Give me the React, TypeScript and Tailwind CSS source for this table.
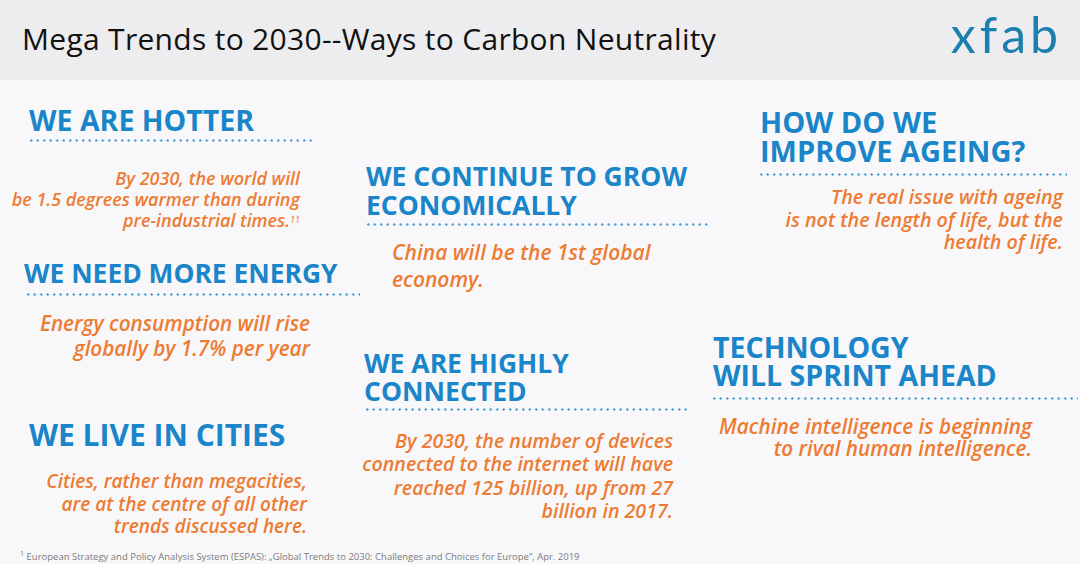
const Dots = ({ className }: { className: string }) => (
  <div
    className={`h-[3px] bg-[radial-gradient(circle,#4f9fd8_1.1px,transparent_1.4px)] bg-[length:6.5px_3px] ${className}`}
  />
)

const Heading = ({ lines, className }: { lines: string[]; className: string }) => (
  <h2 className={`font-bold uppercase text-[#1a85c8] ${className}`}>
    {lines.map((l) => (
      <div key={l}>{l}</div>
    ))}
  </h2>
)

const Body = ({ lines, className }: { lines: React.ReactNode[]; className: string }) => (
  <p className={`italic font-semibold text-[#ee7b32] ${className}`}>
    {lines.map((l, i) => (
      <span key={i} className="block">
        {l}
      </span>
    ))}
  </p>
)

export default function App() {
  return (
    <div className="w-[1080px] h-[564px] flex flex-col bg-[#f8f8fb] overflow-hidden font-['Open_Sans',sans-serif]">
      {/* Title bar */}
      <header className="h-[80px] shrink-0 bg-[#ededef] flex items-center justify-between pl-[22px] pr-[22px]">
        <h1 className="text-[30px] tracking-[0.3px] text-[#111] leading-none -mt-[2px]">
          Mega Trends to 2030--Ways to Carbon Neutrality
        </h1>
        <span className="font-['Lato',sans-serif] font-normal text-[50px] leading-none text-[#1b80b0] tracking-[4px] -mt-[12px] -mr-[4px]">
          xfab
        </span>
      </header>

      <main className="h-[470px] flex">
        {/* Column 1 */}
        <div className="w-[362px] shrink-0 flex flex-col">
          <Heading lines={["We are hotter"]} className="text-[28.5px] leading-[28px] mt-[26px] pl-[29px]" />
          <Dots className="mt-[5px] ml-[28px] w-[284px]" />
          <Body
            className="text-[18px] leading-[21px] text-right pr-[62px] mt-[26px]"
            lines={[
              "By 2030, the world will",
              "be 1.5 degrees warmer than during",
              <>
                pre-industrial times.<sup className="text-[9px] font-normal">11</sup>
              </>,
            ]}
          />
          <Heading lines={["We need more energy"]} className="text-[26.4px] leading-[28px] mt-[28px] pl-[24px]" />
          <Dots className="mt-[6px] ml-[25px] w-[335px]" />
          <Body
            className="text-[20.7px] leading-[25px] text-right pr-[52px] mt-[15px]"
            lines={["Energy consumption will rise", "globally by 1.7% per year"]}
          />
          <Heading lines={["We live in cities"]} className="text-[30px] leading-[28px] mt-[60px] pl-[29px]" />
          <Body
            className="text-[19px] leading-[22.5px] text-right pr-[55px] mt-[21px]"
            lines={["Cities, rather than megacities,", "are at the centre of all other", "trends discussed here."]}
          />
        </div>

        {/* Column 2 */}
        <div className="w-[348px] shrink-0 flex flex-col">
          <Heading
            lines={["We continue to grow", "economically"]}
            className="text-[26.5px] leading-[28.5px] mt-[82px] pl-[4px]"
          />
          <Dots className="mt-[4px] ml-[3px] w-[343px]" />
          <Body
            className="text-[21px] leading-[27px] pl-[30px] mt-[13px]"
            lines={["China will be the 1st global", "economy."]}
          />
          <Heading
            lines={["We are highly", "connected"]}
            className="text-[26.5px] leading-[27.5px] mt-[57px] pl-[2px]"
          />
          <Dots className="mt-[3px] ml-[2px] w-[323px]" />
          <Body
            className="text-[19.6px] leading-[23.3px] text-right pr-[37px] mt-[18px]"
            lines={[
              "By 2030, the number of devices",
              "connected to the internet will have",
              "reached 125 billion, up from 27",
              "billion in 2017.",
            ]}
          />
        </div>

        {/* Column 3 */}
        <div className="flex-1 flex flex-col">
          <Heading
            lines={["How do we", "improve ageing?"]}
            className="text-[29px] leading-[29px] mt-[27px] pl-[50px]"
          />
          <Dots className="mt-[8px] ml-[48px] w-[309px]" />
          <Body
            className="text-[19.7px] leading-[22.5px] text-right pr-[17px] mt-[10px]"
            lines={["The real issue with ageing", "is not the length of life, but the", "health of life."]}
          />
          <Heading
            lines={["Technology", "will sprint ahead"]}
            className="text-[28.5px] leading-[28.5px] mt-[79px] pl-[3px]"
          />
          <Dots className="mt-[7px] ml-[1px] w-[367px]" />
          <Body
            className="text-[20.7px] leading-[22.5px] text-right pr-[48px] mt-[15px]"
            lines={["Machine intelligence is beginning", "to rival human intelligence."]}
          />
        </div>
      </main>

      <footer className="h-[14px] leading-[14px] pl-[20px] text-[9.5px] text-[#7a7a7a]">
        <sup>1</sup> European Strategy and Policy Analysis System (ESPAS): „Global Trends to 2030: Challenges and Choices for
        Europe“, Apr. 2019
      </footer>
    </div>
  )
}
